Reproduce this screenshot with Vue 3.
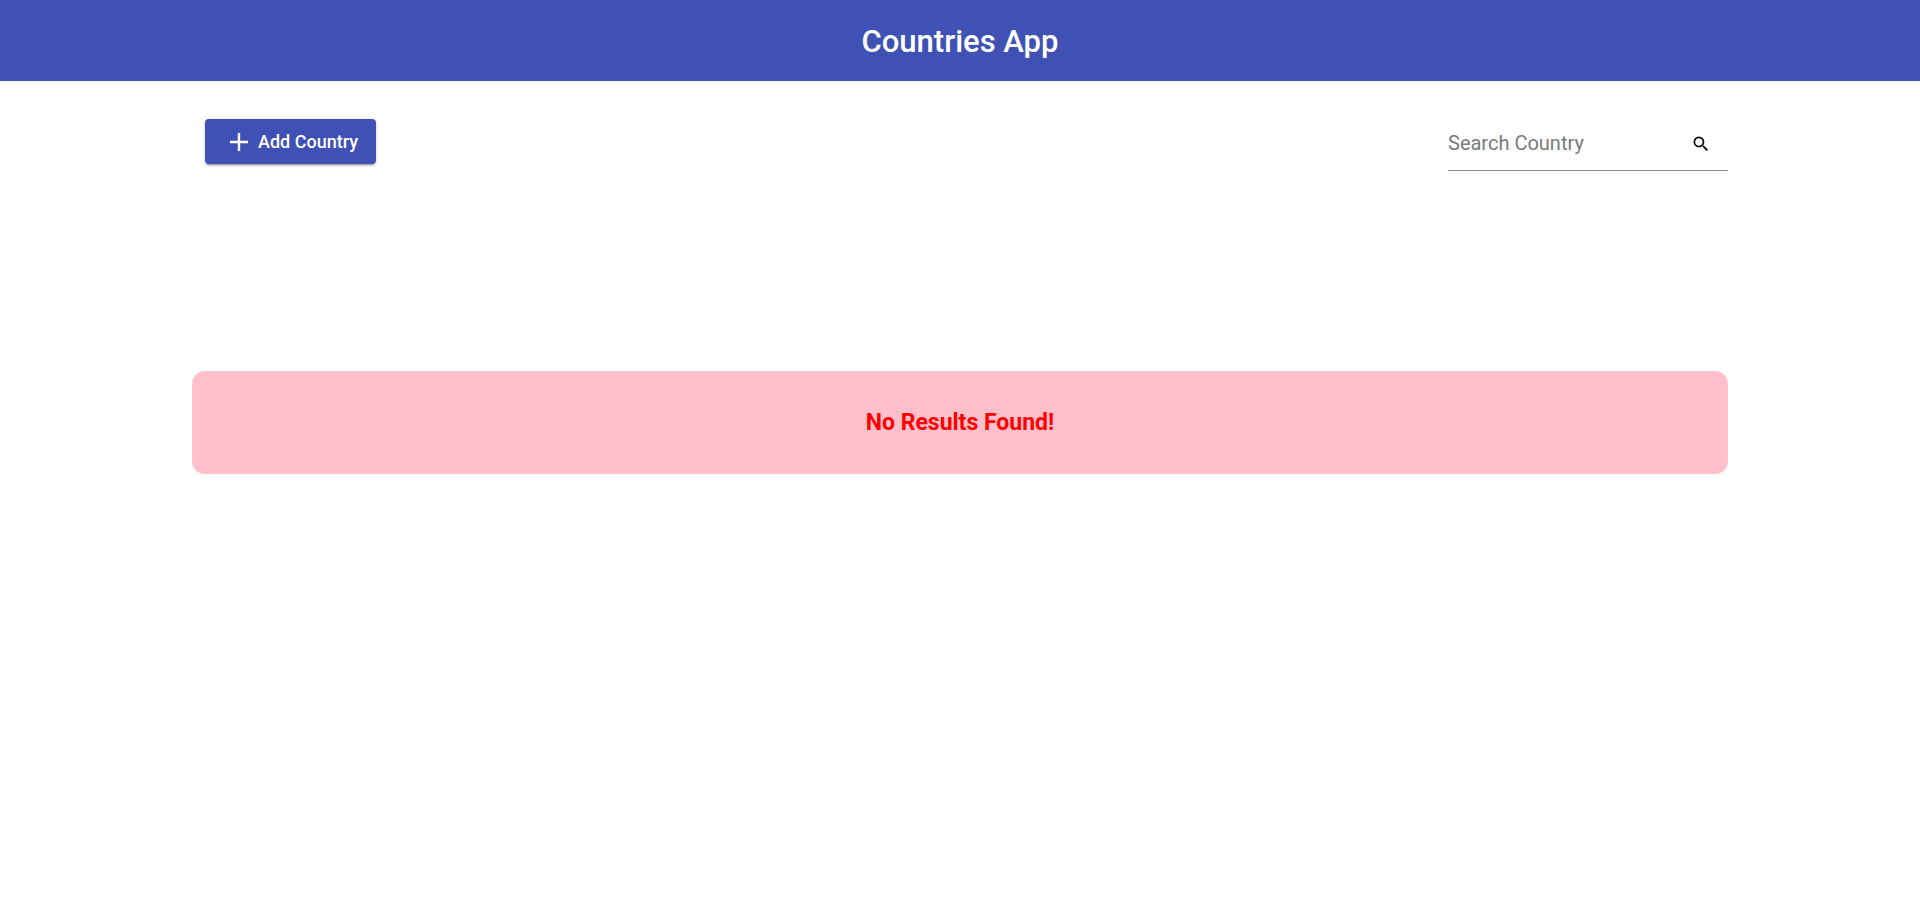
<script setup>
import { ref } from 'vue'

const query = ref('')
</script>

<template>
  <div class="page">
    <header class="header">
      <h1>Countries App</h1>
    </header>
    <main class="content">
      <div class="toolbar">
        <button type="button" class="add">
          <svg viewBox="0 0 18 18" width="18" height="18" aria-hidden="true">
            <path d="M9 0v18M0 9h18" fill="none" stroke="currentColor" stroke-width="2.4" />
          </svg>
          <span>Add Country</span>
        </button>
        <form class="search" role="search" @submit.prevent>
          <input v-model="query" type="text" placeholder="Search Country" aria-label="Search Country" />
          <button type="submit" class="go" aria-label="Search">
            <svg viewBox="0 0 24 24" width="20" height="20" aria-hidden="true">
              <path
                fill="currentColor"
                d="M15.5 14h-.79l-.28-.27A6.471 6.471 0 0 0 16 9.5 6.5 6.5 0 1 0 9.5 16c1.61 0 3.09-.59 4.23-1.57l.27.28v.79l5 4.99L20.49 19l-4.99-5zm-6 0C7.01 14 5 11.99 5 9.5S7.01 5 9.5 5 14 7.01 14 9.5 11.99 14 9.5 14z"
              />
            </svg>
          </button>
        </form>
      </div>
      <p class="empty" role="status">No Results Found!</p>
    </main>
  </div>
</template>

<style>
body {
  margin: 0;
  background: #fff;
}
</style>

<style scoped>
.page {
  font-family: Roboto, "Liberation Sans", sans-serif;
}

.header {
  display: flex;
  align-items: center;
  justify-content: center;
  padding: 22px 16px 19px;
  background: #3f51b5;
  color: #fff;
}

h1 {
  margin: 0;
  font-size: 31px;
  line-height: 40px;
  font-weight: 500;
}

.content {
  width: 80%;
  margin: 0 auto;
}

.toolbar {
  display: flex;
  align-items: flex-start;
  justify-content: space-between;
  padding: 38px 0 0 13px;
}

.add {
  display: flex;
  align-items: center;
  gap: 10px;
  height: 45px;
  padding: 0 18px 0 25px;
  border: 0;
  border-radius: 4px;
  background: #3f51b5;
  color: #fff;
  font-family: inherit;
  font-size: 18px;
  font-weight: 500;
  white-space: nowrap;
  cursor: pointer;
  box-shadow: 0 3px 1px -2px rgba(0, 0, 0, 0.2), 0 2px 2px 0 rgba(0, 0, 0, 0.14), 0 1px 5px 0 rgba(0, 0, 0, 0.12);
}

.search {
  display: flex;
  align-items: center;
  box-sizing: border-box;
  width: 280px;
  height: 52px;
  padding-bottom: 3px;
  border-bottom: 1px solid #8a8a8a;
}

.search input {
  flex: 1;
  min-width: 0;
  height: 48px;
  padding: 0;
  border: 0;
  outline: 0;
  background: transparent;
  color: #000;
  font-family: inherit;
  font-size: 20px;
}

.search input::placeholder {
  color: #7a7a7a;
  opacity: 1;
}

.go {
  display: flex;
  padding: 2px 0 0;
  margin-right: 17px;
  border: 0;
  background: transparent;
  color: #000;
  cursor: pointer;
}

.empty {
  margin: 200px 0 0;
  padding: 36px 16px;
  border-radius: 13px;
  background: #ffc0cb;
  color: #f00;
  font-size: 23px;
  line-height: 31px;
  font-weight: 700;
  text-align: center;
}
</style>
